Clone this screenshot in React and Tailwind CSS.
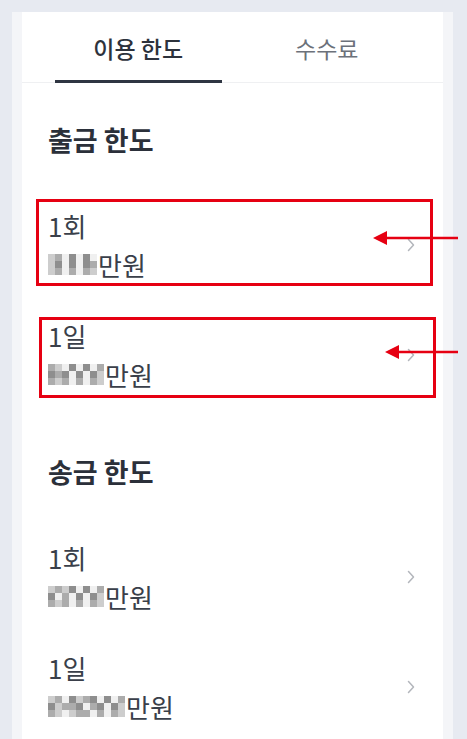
import React from "react";

const shade = {
  d: "bg-[#8e8e8e]",
  m: "bg-[#acacac]",
  l: "bg-[#cdcdcd]",
  w: "bg-[#f0f0f0]",
};

function Mosaic({ rows }) {
  return (
    <div className="flex flex-col mr-px">
      {rows.map((r, i) => (
        <div key={i} className="flex">
          {r.split("").map((c, j) => (
            <div key={j} className={`w-[7px] h-[7px] ${shade[c]}`} />
          ))}
        </div>
      ))}
    </div>
  );
}

function Chevron() {
  return (
    <svg width="8" height="14" viewBox="0 0 8 14" className="shrink-0">
      <polyline points="1.5,1.5 6.5,7 1.5,12.5" fill="none" stroke="#b3b6bc" strokeWidth="1.5" strokeLinecap="round" strokeLinejoin="round" />
    </svg>
  );
}

function Row({ label, rows }) {
  return (
    <div className="flex items-center justify-between py-[16px] pl-[26px] pr-[28px]">
      <div className="text-[26px] text-[#3a3f4a]">
        <div className="leading-[39px]">{label}</div>
        <div className="leading-[39px] flex items-center">
          <Mosaic rows={rows} />
          <span>만원</span>
        </div>
      </div>
      <Chevron />
    </div>
  );
}

function Arrow({ tipX, y }) {
  return (
    <svg className="absolute left-0 top-0" width="467" height="739" viewBox="0 0 467 739">
      <line x1={tipX + 10} y1={y} x2="458" y2={y} stroke="#e60012" strokeWidth="2.6" />
      <polygon points={`${tipX},${y} ${tipX + 14},${y - 7} ${tipX + 14},${y + 7}`} fill="#e60012" />
    </svg>
  );
}

export default function App() {
  return (
    <div
      className="relative w-[467px] h-[739px] overflow-hidden bg-[#e7eaf1] pt-3 pl-3 pr-[14px]"
      style={{ fontFamily: '"Noto Sans CJK KR", "Noto Sans", sans-serif' }}
    >
      <div className="h-[740px] bg-white border-x-[10px] border-[#f4f5f8]">
        <div className="grid grid-cols-2 gap-[22px] px-[33px] border-b border-[#eff0f2]">
          <div className="-mb-px pt-[22px] pb-[18px] leading-[28px] text-[23px] font-medium text-center text-[#2d323c] border-b-[3px] border-[#2f3542]">
            이용 한도
          </div>
          <div className="-mb-px pt-[22px] pb-[18px] leading-[28px] text-[23px] text-center text-[#6c717a] border-b-[3px] border-transparent">
            수수료
          </div>
        </div>

        <div className="pt-[41px] pb-[34px] pl-[26px] leading-[32px] text-[27px] font-bold text-[#2b303a]">
          출금 한도
        </div>
        <Row label="1회" rows={["lmwdwdw", "ldwdwdm", "lmwmwml"]} />
        <Row label="1일" rows={["mlwdwdwm", "dmdwdwdl", "mlmwmwml"]} />

        <div className="pt-[46px] pb-[34px] pl-[26px] leading-[32px] text-[27px] font-bold text-[#2b303a]">
          송금 한도
        </div>
        <Row label="1회" rows={["lmldwdwm", "dwmwdwdl", "mlmwmwml"]} />
        <Row label="1일" rows={["lmwdlmdwdwm", "dlmmdwmdwdl", "mlwlmmwmwml"]} />
      </div>

      <div className="absolute left-[36px] top-[199px] w-[397px] h-[87px] border-[3px] border-[#e60012]" />
      <div className="absolute left-[39px] top-[317px] w-[397px] h-[81px] border-[3px] border-[#e60012]" />
      <Arrow tipX={373} y={238} />
      <Arrow tipX={385} y={352} />
    </div>
  );
}
